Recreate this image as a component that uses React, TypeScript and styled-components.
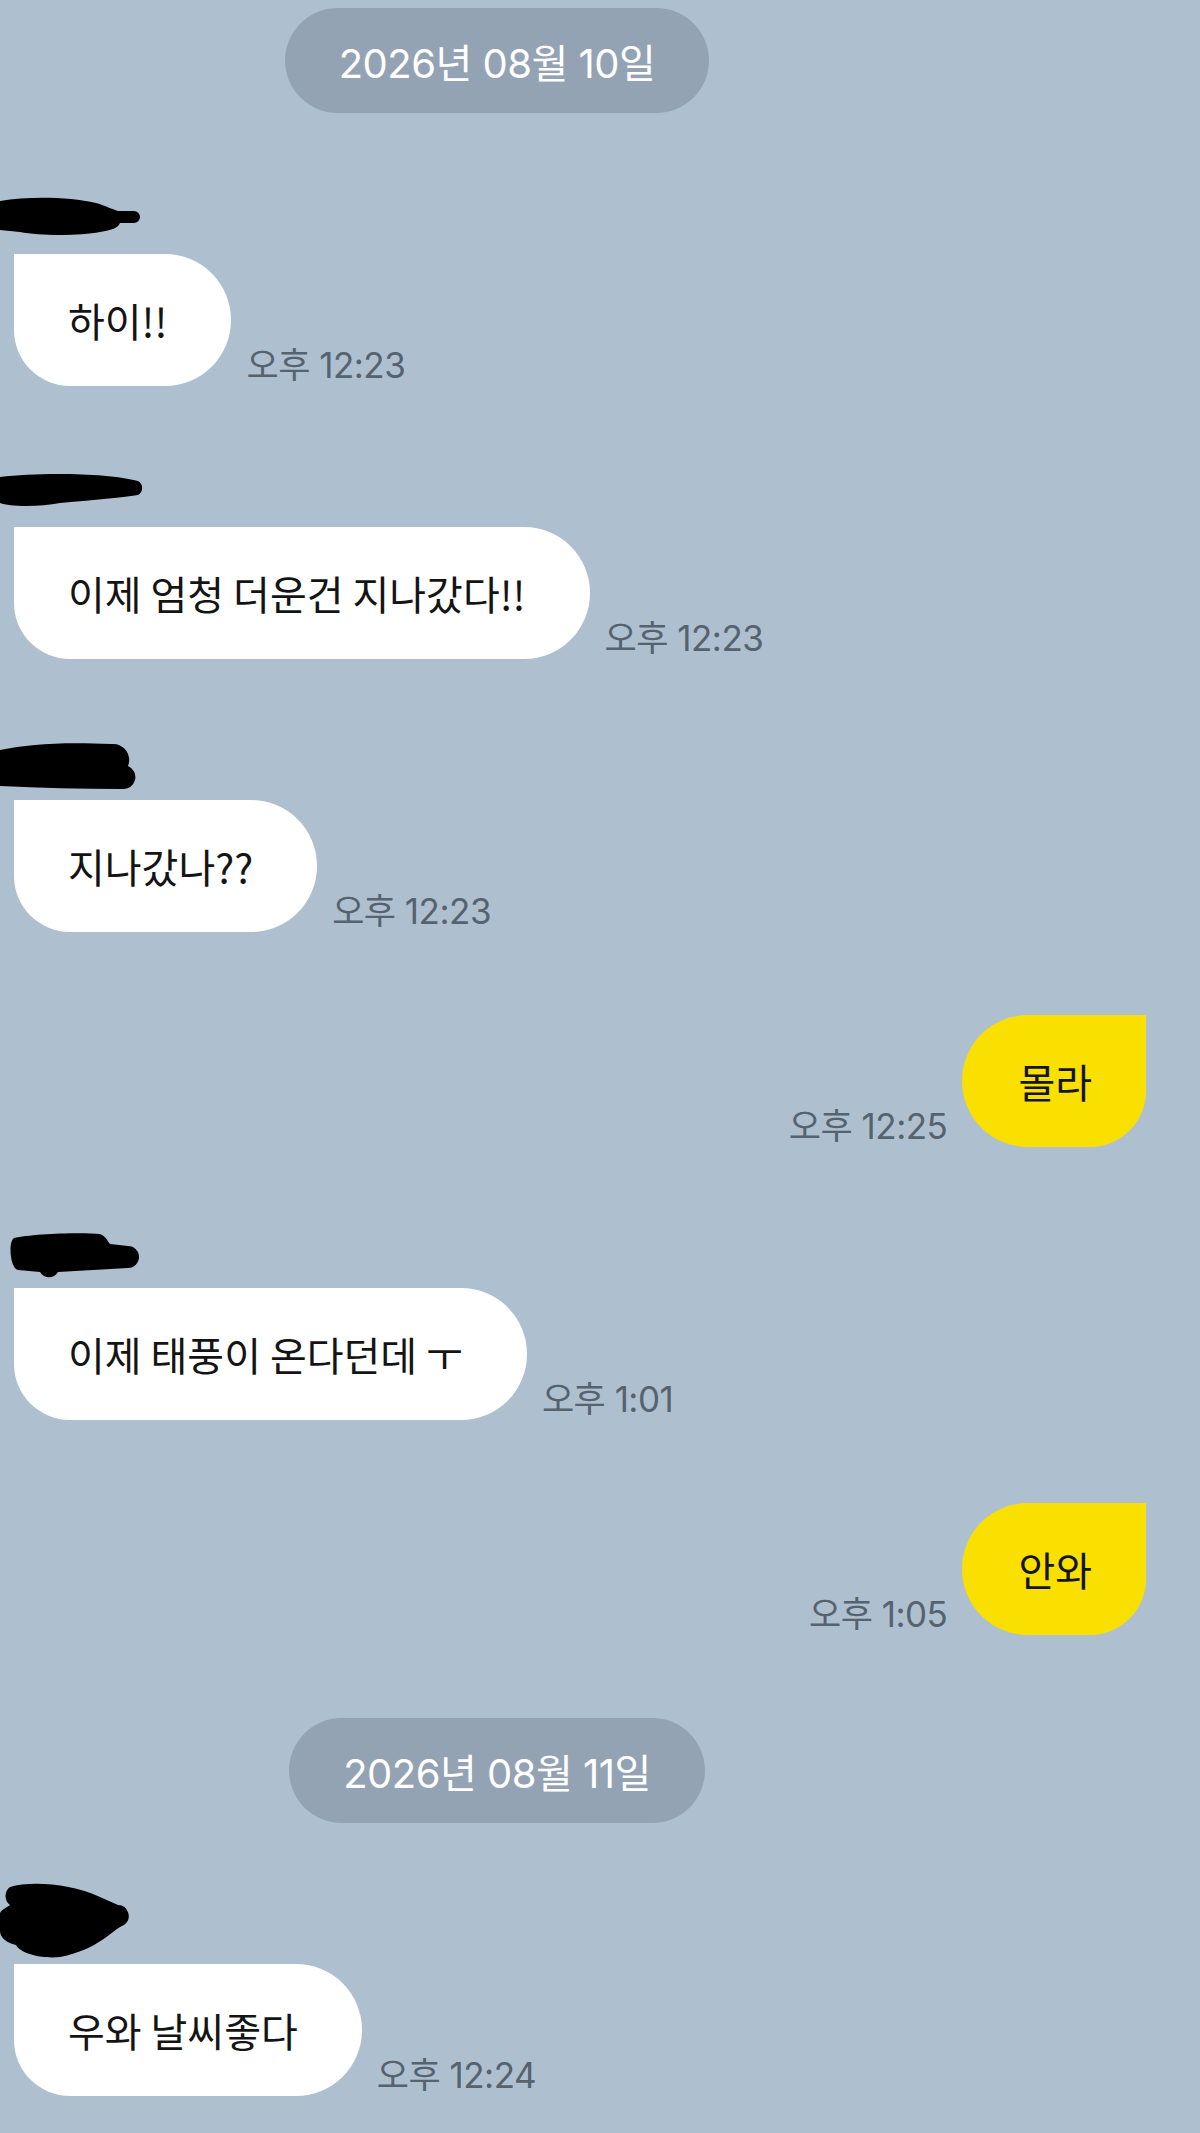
import React from "react";
import styled, { createGlobalStyle } from "styled-components";

const GlobalStyle = createGlobalStyle`
  html, body {
    margin: 0;
    padding: 0;
    background: #aec0d0;
  }
  body {
    font-family: "Noto Sans CJK KR", "Noto Sans", sans-serif;
  }
`;

const Page = styled.div`
  width: 1200px;
  height: 2133px;
  box-sizing: border-box;
  padding: 8px 54px 0 14px;
  display: flex;
  flex-direction: column;
  gap: 83px;
  overflow: hidden;
  background: #aec0d0;
`;

const DateRow = styled.div`
  width: 994px;
  margin-left: -14px;
  display: flex;
  justify-content: center;
`;

const DatePill = styled.div`
  height: 105px;
  padding: 0 54px;
  border-radius: 53px;
  background: #94a3b3;
  color: #ffffff;
  font-family: Inter, "Noto Sans CJK KR", sans-serif;
  font-size: 40px;
  letter-spacing: -0.5px;
  display: flex;
  align-items: center;
`;

const Group = styled.div`
  display: flex;
  flex-direction: column;
`;

const NameRow = styled.div<{ $gap: number }>`
  height: 58px;
  margin-left: -14px;
  box-sizing: border-box;
  padding-bottom: ${(p) => p.$gap}px;
  display: flex;
  align-items: flex-end;
  svg {
    display: block;
    flex-shrink: 0;
  }
`;

const Line = styled.div<{ $mine?: boolean }>`
  display: flex;
  align-items: flex-end;
  justify-content: ${(p) => (p.$mine ? "flex-end" : "flex-start")};
  gap: 15px;
`;

const Bubble = styled.div<{ $mine?: boolean }>`
  height: 132px;
  box-sizing: border-box;
  padding: ${(p) => (p.$mine ? "0 54px 0 56px" : "0 64px 0 54px")};
  display: flex;
  align-items: center;
  background: ${(p) => (p.$mine ? "#f9e000" : "#ffffff")};
  border-radius: ${(p) => (p.$mine ? "66px 0 56px 66px" : "0 66px 66px 56px")};
  color: #141414;
  font-size: 40px;
  white-space: nowrap;
`;

const Time = styled.span`
  font-family: Inter, "Noto Sans CJK KR", sans-serif;
  font-size: 35px;
  line-height: 35px;
  color: #56626e;
  margin-bottom: 3px;
  white-space: nowrap;
  letter-spacing: -0.5px;
`;

const scribbles: Record<string, { w: number; h: number; d: string }> = {
  a: {
    w: 142,
    h: 44,
    d: "M0 6 C30 1 70 2 96 8 C106 11 112 14 118 16 L134 16 A6 6 0 0 1 134 28 L120 28 C118 33 112 35 100 37 C80 41 40 41 20 37 L0 35 Z",
  },
  b: {
    w: 146,
    h: 34,
    d: "M0 4 C40 -1 110 0 138 8 A8 8 0 0 1 138 22 C110 26 80 28 60 30 C40 34 10 34 0 30 Z",
  },
  c: {
    w: 136,
    h: 48,
    d: "M0 8 C30 2 60 0 112 2 A16 16 0 0 1 128 24 A12 12 0 0 1 122 47 C80 47 40 46 0 44 Z",
  },
  d: {
    w: 140,
    h: 46,
    d: "M14 6 C30 2 80 0 100 2 C106 4 108 10 110 12 L128 14 A11 11 0 0 1 128 36 L58 40 C54 47 44 47 40 40 L18 38 C10 36 8 10 14 6 Z",
  },
  e: {
    w: 132,
    h: 76,
    d: "M10 4 C30 -2 70 0 100 14 L118 22 A11 11 0 0 1 124 42 C110 48 100 66 60 74 C40 76 20 70 16 62 C6 60 0 54 0 48 L0 30 C2 26 8 24 10 22 C4 18 4 8 10 4 Z",
  },
};

const Scribble: React.FC<{ kind: string }> = ({ kind }) => {
  const s = scribbles[kind];
  return (
    <svg width={s.w} height={s.h} viewBox={`0 0 ${s.w} ${s.h}`}>
      <path d={s.d} fill="#000" />
    </svg>
  );
};

const Received: React.FC<{ name: string; gap: number; text: string; time: string }> = ({
  name,
  gap,
  text,
  time,
}) => (
  <Group>
    <NameRow $gap={gap}>
      <Scribble kind={name} />
    </NameRow>
    <Line>
      <Bubble>{text}</Bubble>
      <Time>{time}</Time>
    </Line>
  </Group>
);

const Sent: React.FC<{ text: string; time: string }> = ({ text, time }) => (
  <Line $mine>
    <Time>{time}</Time>
    <Bubble $mine>{text}</Bubble>
  </Line>
);

export default function App() {
  return (
    <>
      <GlobalStyle />
      <Page>
        <DateRow>
          <DatePill>2026년 08월 10일</DatePill>
        </DateRow>
        <Received name="a" gap={15} text="하이!!" time="오후 12:23" />
        <Received name="b" gap={20} text="이제 엄청 더운건 지나갔다!!" time="오후 12:23" />
        <Received name="c" gap={10} text="지나갔나??" time="오후 12:23" />
        <Sent text="몰라" time="오후 12:25" />
        <Received name="d" gap={10} text="이제 태풍이 온다던데 ㅜ" time="오후 1:01" />
        <Sent text="안와" time="오후 1:05" />
        <DateRow>
          <DatePill>2026년 08월 11일</DatePill>
        </DateRow>
        <Received name="e" gap={5} text="우와 날씨좋다" time="오후 12:24" />
      </Page>
    </>
  );
}
